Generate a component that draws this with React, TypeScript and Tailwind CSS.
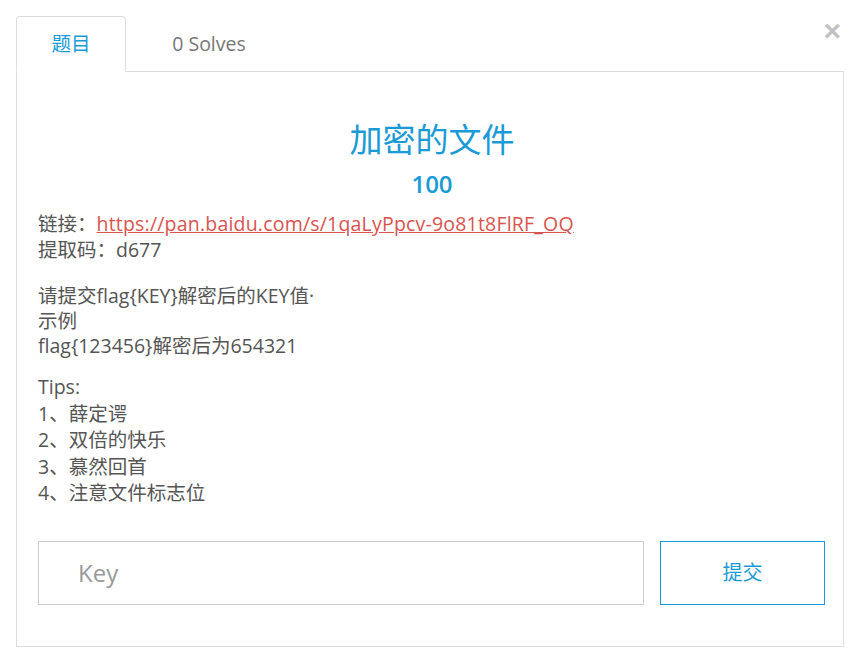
import React from "react";

const font = { fontFamily: '"Open Sans", "Noto Sans CJK SC", sans-serif' };

export default function App() {
  return (
    <div className="relative w-[863px] h-[666px] bg-white text-[#555]" style={font}>
      <button
        className="absolute right-[22px] top-[16px] text-[30px] leading-none text-[#c2c2c2] font-bold"
        style={{ fontFamily: '"Liberation Sans", sans-serif' }}
      >
        ×
      </button>
      <div className="pt-[16px] pl-[16px] w-[844px]">
        <div className="flex border-b border-[#ddd] h-[56px]">
          <div className="w-[110px] h-[56px] -mb-px border border-[#ddd] border-b-white rounded-t-[4px] bg-white flex items-center justify-center text-[19.5px] text-[#1a9ad6]">
            题目
          </div>
          <div className="w-[166px] h-[56px] flex items-center justify-center text-[19.5px] text-[#777]">
            0 Solves
          </div>
        </div>
        <div className="border border-t-0 border-[#ddd] h-[575px] pl-[21px] pr-[17px]">
          <div className="pt-[46px] text-center text-[33px] leading-[44px] text-[#1a9ad6]">加密的文件</div>
          <div className="text-center text-[24px] leading-[32px] font-semibold text-[#1a9ad6] mt-[6px]">100</div>
          <div className="mt-[11px] text-[19.5px] leading-[26px]">
            <div>
              链接：<a className="text-[#d9534f] underline tracking-[0.2px]" href="#">https://pan.baidu.com/s/1qaLyPpcv-9o81t8FlRF_OQ</a>
            </div>
            <div>提取码：d677</div>
          </div>
          <div className="mt-[20px] text-[19.5px] leading-[25px]">
            <div>请提交flag{"{KEY}"}解密后的KEY值·</div>
            <div>示例</div>
            <div>flag{"{123456}"}解密后为654321</div>
          </div>
          <div className="mt-[16px] text-[19.5px] leading-[26.5px]">
            <div>Tips:</div>
            <div>1、薛定谔</div>
            <div>2、双倍的快乐</div>
            <div>3、慕然回首</div>
            <div>4、注意文件标志位</div>
          </div>
          <div className="mt-[34px] flex gap-[16px]">
            <input
              className="w-[606px] shrink-0 h-[64px] border border-[#ccc] px-[39px] text-[24px] text-[#555] placeholder:text-[#999] outline-none"
              placeholder="Key"
              style={font}
            />
            <button className="w-[165px] shrink-0 h-[64px] border border-[#1a9ad6] text-[#1a9ad6] text-[20px]">提交</button>
          </div>
        </div>
      </div>
    </div>
  );
}
